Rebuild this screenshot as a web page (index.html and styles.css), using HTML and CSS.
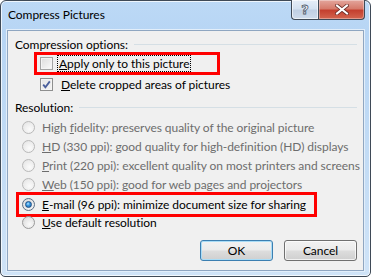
FILE: index.html
```html
<!DOCTYPE html>
<html>
<head>
<meta charset="utf-8">
<link rel="stylesheet" href="styles.css">
</head>
<body>
<div class="window">
  <div class="titlebar">
    <div class="title">Compress Pictures</div>
    <div class="caption-buttons">
      <div class="cap-btn help"><span>?</span></div>
      <div class="cap-btn close">
        <svg width="14" height="11" viewBox="0 0 14 11"><path d="M2 1.5 L12 9.5 M12 1.5 L2 9.5" stroke="#6b2d28" stroke-width="3.6" stroke-linecap="square"/><path d="M2 1.5 L12 9.5 M12 1.5 L2 9.5" stroke="#ffffff" stroke-width="2" stroke-linecap="square"/></svg>
      </div>
    </div>
  </div>
  <div class="client">
    <div class="heading"><span>Compression options:</span><div class="rule"></div></div>
    <div class="marked first-mark">
      <div class="row">
        <span class="check"></span>
        <span class="label focus"><u>A</u>pply only to this picture</span>
      </div>
    </div>
    <div class="row check-row">
      <span class="check checked">
        <svg width="11" height="11" viewBox="0 0 11 11"><path d="M2.2 5.6 L4.4 8.2 L8.8 2.4" fill="none" stroke="#4a5f9c" stroke-width="1.8"/></svg>
      </span>
      <span class="label"><u>D</u>elete cropped areas of pictures</span>
    </div>
    <div class="heading res-heading"><span>Resolution:</span><div class="rule"></div></div>
    <div class="radios">
      <div class="row radio-row disabled"><span class="radio"></span><span class="label">High <u>f</u>idelity: preserves quality of the original picture</span></div>
      <div class="row radio-row disabled"><span class="radio"></span><span class="label"><u>H</u>D (330 ppi): good quality for high-definition (HD) displays</span></div>
      <div class="row radio-row disabled"><span class="radio"></span><span class="label"><u>P</u>rint (220 ppi): excellent quality on most printers and screens</span></div>
      <div class="row radio-row disabled"><span class="radio"></span><span class="label"><u>W</u>eb (150 ppi): good for web pages and projectors</span></div>
      <div class="marked email-mark">
        <div class="row radio-row"><span class="radio selected"><span class="dot"></span></span><span class="label"><u>E</u>-mail (96 ppi): minimize document size for sharing</span></div>
      </div>
      <div class="row radio-row last"><span class="radio"></span><span class="label"><u>U</u>se default resolution</span></div>
    </div>
    <div class="buttons">
      <div class="btn default">OK</div>
      <div class="btn">Cancel</div>
    </div>
  </div>
</div>
</body>
</html>
```
FILE: styles.css
```css
* { box-sizing: border-box; }
html, body { margin: 0; padding: 0; background: #ffffff; }
body {
  font-family: "Lato", "Noto Sans", sans-serif;
  font-size: 12px;
  letter-spacing: -0.05px;
  color: #000;
}
.window {
  width: 371px;
  height: 277px;
  border: 1px solid #3f4a57;
  border-radius: 6px 6px 5px 5px;
  background: linear-gradient(180deg, #bcd9f6 0%, #b7d5f4 12%, #c3dcf5 60%, #cfe3f7 100%);
  box-shadow: inset 0 0 0 1px rgba(255,255,255,0.75);
  padding: 0 6px 5px 6px;
  display: flex;
  flex-direction: column;
}
.titlebar {
  height: 28px;
  display: flex;
  justify-content: space-between;
  align-items: flex-start;
}
.title {
  margin-top: 6px;
  margin-left: 1px;
  font-size: 12px;
  color: #000;
}
.caption-buttons {
  display: flex;
  margin-top: -1px;
  margin-right: -1px;
}
.cap-btn {
  height: 20px;
  display: flex;
  align-items: center;
  justify-content: center;
  border: 1px solid #3f4a57;
  border-top: none;
}
.help {
  width: 27px;
  border-right: none;
  border-radius: 0 0 0 4px;
  background: linear-gradient(180deg, #e6eef8 0%, #d5e2f1 45%, #c0d0e4 55%, #cfdcec 100%);
  box-shadow: inset 0 0 0 1px rgba(255,255,255,0.6);
}
.help span {
  font-family: "DejaVu Sans", sans-serif;
  font-weight: bold;
  font-size: 13px;
  color: #f4f7fb;
  -webkit-text-stroke: 0.8px #4f5b6b;
  margin-top: -1px;
}
.close {
  width: 47px;
  border-radius: 0 0 4px 0;
  background: linear-gradient(180deg, #e3a69d 0%, #d67b6c 45%, #c4402f 55%, #d3654f 100%);
  box-shadow: inset 0 0 0 1px rgba(255,255,255,0.35);
}
.client {
  flex: 1;
  background: #f0f0f0;
  border: 1px solid #8fa6c1;
  box-shadow: 0 0 0 1px #e2eefa;
  margin-top: 1px;
  padding: 6px 6px 0 7px;
  display: flex;
  flex-direction: column;
}
.heading {
  height: 15px;
  display: flex;
  align-items: center;
  gap: 6px;
}
.rule {
  flex: 1;
  height: 1px;
  background: #d5dfe5;
}
.row {
  display: flex;
  align-items: center;
  height: 19px;
}
.label { white-space: nowrap; }
.label u { text-decoration-thickness: 1px; text-underline-offset: 1px; }
.marked {
  border: 3px solid #ff0000;
}
.first-mark {
  margin-left: 19px;
  width: 186px;
  padding-left: 3px;
}
.first-mark .row { height: 17px; }
.check {
  width: 13px;
  height: 13px;
  border: 1px solid #8e8f8f;
  background: linear-gradient(135deg, #dcdcdc 0%, #eeeeee 60%, #fbfbfb 100%);
  box-shadow: inset 0 0 0 1px #f4f4f4;
  flex: none;
  display: flex;
  align-items: center;
  justify-content: center;
}
.check.checked { background: linear-gradient(135deg, #e6e6e6 0%, #f3f3f3 100%); }
.first-mark .check { border-color: #a4a4a4; }
.first-mark .label { margin-left: 5px; }
.focus {
  outline: 1px dotted #000;
  outline-offset: 0;
  padding: 0 1px;
  line-height: 15px;
}
.check-row {
  margin-left: 25px;
}
.check-row .label { margin-left: 8px; }
.res-heading { margin-top: 6px; }
.radios {
  display: flex;
  flex-direction: column;
  margin-top: 3px;
}
.radio-row { margin-left: 7px; }
.radio {
  width: 13px;
  height: 13px;
  border-radius: 50%;
  border: 1px solid #9a9a9a;
  background: radial-gradient(circle at 60% 65%, #fafafa 0%, #e6e6e6 55%, #d2d2d2 100%);
  flex: none;
  display: flex;
  align-items: center;
  justify-content: center;
}
.radio-row .label { margin-left: 7px; }
.disabled .label { color: #6d6d6d; }
.disabled .radio { border-color: #b9b9b9; background: radial-gradient(circle at 60% 65%, #fbfbfb 0%, #ececec 60%, #dedede 100%); }
.email-mark {
  margin-left: 1px;
  width: 301px;
  padding-left: 3px;
  margin-top: -2px;
}
.email-mark .radio-row { margin-left: 0; height: 19px; }
.radio.selected { border-color: #5a6f86; }
.dot {
  width: 7px;
  height: 7px;
  border-radius: 50%;
  background: radial-gradient(circle at 40% 35%, #bfe3ff 0%, #3da0e6 35%, #1a5c9f 100%);
  border: 1px solid #1f4f86;
}
.last { margin-top: -4px; }
.buttons {
  display: flex;
  justify-content: flex-end;
  gap: 11px;
  margin-top: 8px;
}
.btn {
  width: 73px;
  height: 21px;
  border: 1px solid #707070;
  border-radius: 3px;
  background: linear-gradient(180deg, #f2f2f2 0%, #ebebeb 48%, #dddddd 52%, #cfcfcf 100%);
  box-shadow: inset 0 0 0 1px rgba(255,255,255,0.7);
  display: flex;
  align-items: center;
  justify-content: center;
}
.btn.default {
  border-color: #3c7fb1;
  box-shadow: inset 0 0 0 1px #a9dcf6;
}
```
